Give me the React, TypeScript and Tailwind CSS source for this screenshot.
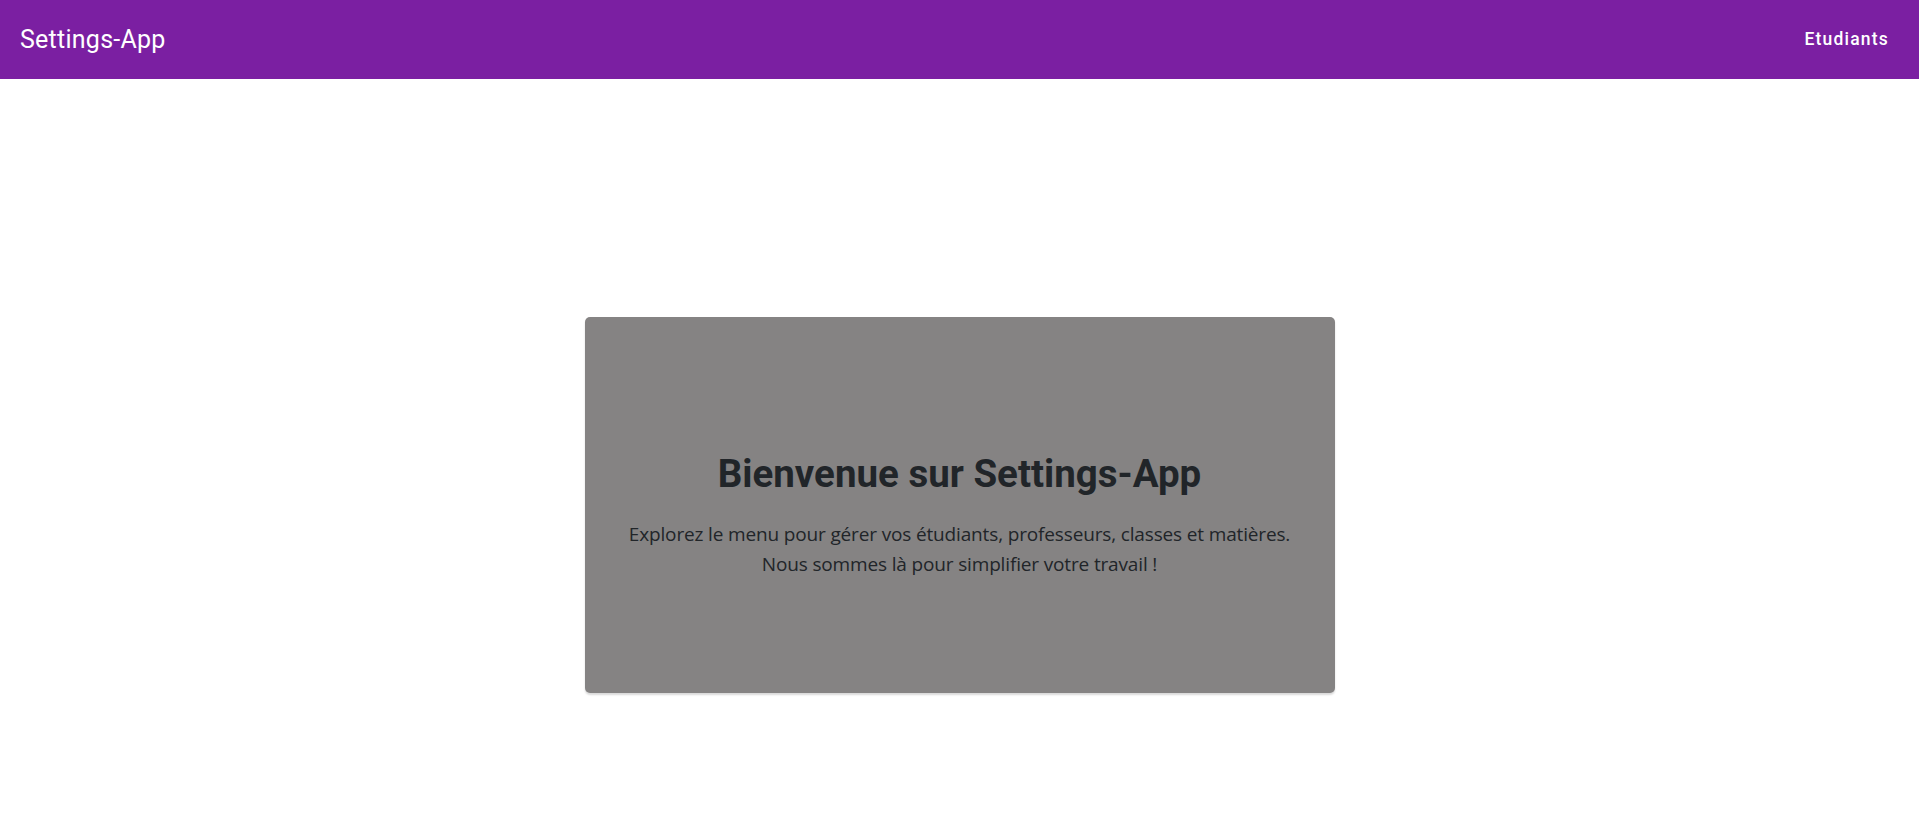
import React from "react";

export default function App() {
  return (
    <div className="min-h-screen bg-white">
      <header className="h-[79px] bg-[#7b1fa2] flex items-center justify-between px-[20px]">
        <div className="text-white text-[25px] leading-none font-normal font-['Roboto',sans-serif] tracking-[0.01em]">
          Settings-App
        </div>
        <button className="text-white text-[17.5px] font-medium font-['Roboto',sans-serif] tracking-[1.2px] px-[10px] py-[7px] rounded">
          Etudiants
        </button>
      </header>
      <main className="flex justify-center pt-[238px]">
        <div className="w-[750px] h-[376px] bg-[#858383] rounded-[5px] shadow-[0_2px_2px_rgba(0,0,0,0.15)] flex flex-col items-center pt-[134px]">
          <h3 className="text-[38.5px] leading-[46px] font-bold text-[#212529] font-['Roboto',sans-serif]">
            Bienvenue sur Settings-App
          </h3>
          <p className="mt-[22px] text-[19px] leading-[30px] tracking-[-0.15px] text-[#212529] text-center font-['Open_Sans','Noto_Sans',sans-serif]">
            Explorez le menu pour gérer vos étudiants, professeurs, classes et matières.
            <br />
            Nous sommes là pour simplifier votre travail !
          </p>
        </div>
      </main>
    </div>
  );
}
